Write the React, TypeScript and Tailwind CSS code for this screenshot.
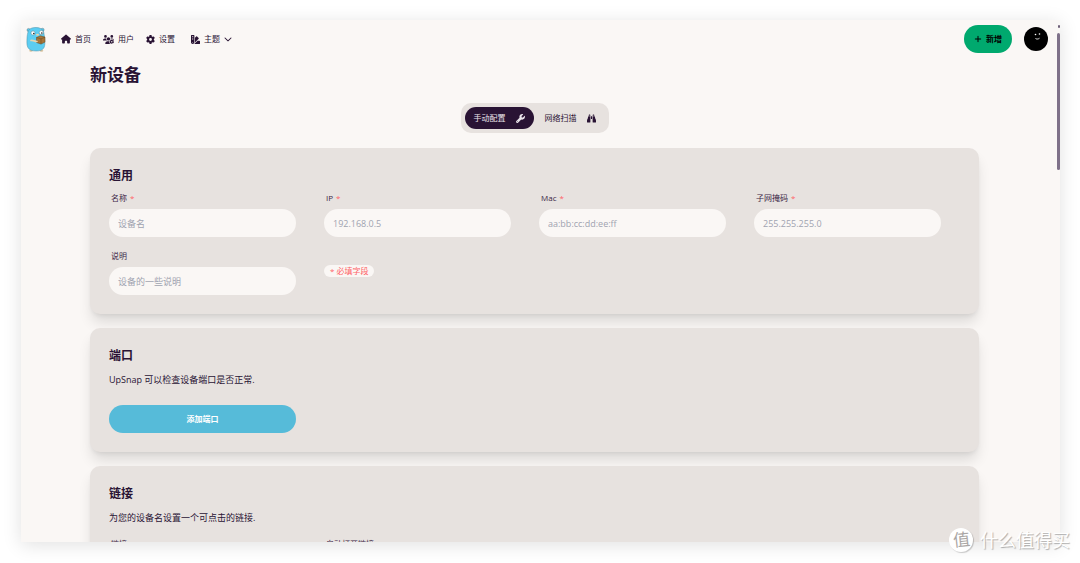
import type { ReactNode } from "react";
import {
  FaBinoculars,
  FaChevronDown,
  FaGear,
  FaHouse,
  FaPlus,
  FaSwatchbook,
  FaUsersGear,
  FaWrench,
} from "react-icons/fa6";

const navLinks = [
  { label: "首页", icon: <FaHouse className="size-[10px]" /> },
  { label: "用户", icon: <FaUsersGear className="size-[11px]" /> },
  { label: "设置", icon: <FaGear className="size-[9px]" /> },
];

const requiredFields = [
  { id: "name", label: "名称", placeholder: "设备名" },
  { id: "ip", label: "IP", placeholder: "192.168.0.5" },
  { id: "mac", label: "Mac", placeholder: "aa:bb:cc:dd:ee:ff" },
  { id: "netmask", label: "子网掩码", placeholder: "255.255.255.0" },
];

function Gopher() {
  return (
    <svg viewBox="0 0 20 25" className="h-[25px] w-5" aria-hidden="true">
      <ellipse cx="5" cy="23.8" rx="1.8" ry="1" fill="#d9c4a0" />
      <ellipse cx="15.5" cy="23.8" rx="1.8" ry="1" fill="#d9c4a0" />
      <circle cx="2.6" cy="3" r="1.6" fill="#5bc8ea" stroke="#4b6670" strokeWidth=".4" />
      <circle cx="16.5" cy="2.8" r="1.6" fill="#5bc8ea" stroke="#4b6670" strokeWidth=".4" />
      <path
        d="M2 5C3 1.500 6 .5 10 .5s7 1.500 7.800 5c.5 3 .7 5 1 9 .4 6-1.300 9.500-8.500 9.500S.8 21 .9 15C1 10.500 1 8.500 2 5z"
        fill="#5ccdf2"
        stroke="#4e8ea3"
        strokeWidth=".5"
      />
      <circle cx="7" cy="6" r="2" fill="#fff" stroke="#58717a" strokeWidth=".4" />
      <circle cx="15.300" cy="5.600" r="2" fill="#fff" stroke="#58717a" strokeWidth=".4" />
      <circle cx="7.800" cy="6.500" r=".8" fill="#222" />
      <circle cx="15.800" cy="6" r=".8" fill="#222" />
      <ellipse cx="11.500" cy="7.800" rx="1.500" ry="1" fill="#e7d3ae" />
      <path d="M10.500 10.500l4-1.700 4.500 1.300v5l-4 2-4.500-1.600z" fill="#a87539" stroke="#674920" strokeWidth=".5" />
      <path d="M10.500 10.500l4.500 1.400 4-1.800M15 11.900v5" fill="none" stroke="#674920" strokeWidth=".5" />
      <path d="M5 13.500c2-.5 3.500.8 6 1" fill="none" stroke="#e7d3ae" strokeWidth="1.600" strokeLinecap="round" />
    </svg>
  );
}

function Card({ title, children }: { title: string; children: ReactNode }) {
  return (
    <section className="rounded-[10px] bg-[#e7e2df] p-[19px] shadow-[0_10px_14px_-2px_rgba(0,0,0,0.12),0_3px_5px_-2px_rgba(0,0,0,0.08)]">
      <h2 className="text-[12px] leading-[18px] font-bold">{title}</h2>
      {children}
    </section>
  );
}

function FieldLabel({ id, label, required }: { id: string; label: string; required?: boolean }) {
  return (
    <label htmlFor={id} className="flex h-5 gap-[3px] px-[2px] text-[8px] leading-[18px] text-[#3c2746]">
      {label}
      {required && <span className="text-[#ff6266]">*</span>}
    </label>
  );
}

function Field({
  id,
  label,
  placeholder,
  required,
}: {
  id: string;
  label: string;
  placeholder?: string;
  required?: boolean;
}) {
  return (
    <div>
      <FieldLabel id={id} label={label} required={required} />
      <input
        id={id}
        type="text"
        placeholder={placeholder}
        className="block h-7 w-full rounded-full bg-[#faf7f5] px-[9px] text-[9px] placeholder:text-[#9fa3b0]"
      />
    </div>
  );
}

function Navbar() {
  return (
    <header className="flex items-center pt-[5px] pl-[5px]">
      <a href="#home" aria-label="UpSnap">
        <Gopher />
      </a>
      <nav className="ml-[15px] flex flex-1 items-center gap-3 text-[8px]">
        {navLinks.map((link) => (
          <a key={link.label} href="#nav" className="flex items-center gap-1">
            {link.icon}
            {link.label}
          </a>
        ))}
        <button type="button" className="ml-1 flex items-center gap-1">
          <FaSwatchbook className="size-[9px]" />
          主题
          <FaChevronDown className="size-[8px]" />
        </button>
      </nav>
      <button
        type="button"
        className="mr-3 flex h-7 items-center gap-1 rounded-full bg-[#00a96e] px-[10px] text-[8px] font-bold text-black"
      >
        <FaPlus className="size-[8px]" />
        新增
      </button>
      <button type="button" aria-label="Account" className="size-6 rounded-full bg-black">
        <svg viewBox="0 0 24 24" className="size-6">
          <circle cx="11.500" cy="7.500" r=".8" fill="#fff" />
          <circle cx="15.500" cy="7" r=".8" fill="#fff" />
          <path d="M11.500 11.500c1.200.8 2.800.7 4-.3" fill="none" stroke="#fff" strokeWidth=".9" />
        </svg>
      </button>
    </header>
  );
}

export default function App() {
  return (
    <div className="relative h-screen overflow-hidden bg-white pt-5 pr-5 pb-[21px] pl-[21px] font-['Open_Sans','Noto_Sans_CJK_SC',sans-serif] text-[#291334]">
      <div className="flex h-full overflow-hidden bg-[#faf7f5] shadow-[0_3px_18px_rgba(0,0,0,0.12)]">
        <div className="min-w-0 flex-1 pr-[9px]">
          <Navbar />
          <main className="px-[69px]">
            <h1 className="mt-[10px] text-[17px] leading-6 font-bold">新设备</h1>

            <div className="mt-4 flex justify-center">
              <div className="flex gap-[2px] rounded-[10px] bg-[#e7e2df] p-1 text-[8px]">
                <button
                  type="button"
                  className="flex h-[22px] items-center gap-[10px] rounded-full bg-[#291334] px-[9px] text-[#e9e3ea]"
                >
                  手动配置
                  <FaWrench className="size-[9px]" />
                </button>
                <button type="button" className="flex h-[22px] items-center gap-[10px] rounded-full px-[9px]">
                  网络扫描
                  <FaBinoculars className="size-[9px]" />
                </button>
              </div>
            </div>

            <div className="mt-[15px] flex flex-col gap-[14px]">
              <Card title="通用">
                <div className="mt-1 grid grid-cols-[repeat(auto-fill,187px)] gap-x-7 gap-y-[10px]">
                  {requiredFields.map((field) => (
                    <Field key={field.id} {...field} required />
                  ))}
                  <Field id="description" label="说明" placeholder="设备的一些说明" />
                  <span className="self-center justify-self-start rounded-full bg-[#faf7f5] px-[6px] text-[8px] leading-3 text-[#ff6266]">
                    * 必填字段
                  </span>
                </div>
              </Card>

              <Card title="端口">
                <p className="mt-2 text-[9px] leading-[14px]">UpSnap 可以检查设备端口是否正常.</p>
                <button
                  type="button"
                  className="mt-[18px] block h-7 w-[187px] rounded-full bg-[#56bbd9] text-[8px] font-bold text-white"
                >
                  添加端口
                </button>
              </Card>

              <Card title="链接">
                <p className="mt-2 text-[9px] leading-[14px]">为您的设备名设置一个可点击的链接.</p>
                <div className="mt-[10px] grid grid-cols-[repeat(auto-fill,187px)] gap-x-7">
                  <Field id="link" label="链接" />
                  <div>
                    <FieldLabel id="link-open" label="自动打开链接" />
                    <select id="link-open" className="block h-7 w-full rounded-full bg-[#faf7f5]" />
                  </div>
                </div>
              </Card>
            </div>
          </main>
        </div>

        {/* scrollbar */}
        <div className="flex w-[3px] flex-col items-end gap-[5px] pt-[5px]">
          <div className="h-[3px] w-[2px] rounded-full bg-[#6f6078]" />
          <div className="h-[137px] w-[3px] rounded-full bg-[#7f7189]" />
        </div>
      </div>

      {/* watermark */}
      <div className="absolute right-[10px] bottom-[11px] flex items-center gap-[7px] text-white">
        <span className="flex size-6 items-center justify-center rounded-full bg-white text-[17px] leading-6 text-[#aaa6a4] shadow-[1px_1px_1px_rgba(0,0,0,0.2)]">
          <span className="-rotate-6">值</span>
        </span>
        <span className="text-[18px] leading-6 [text-shadow:1px_1px_1px_rgba(0,0,0,0.3)]">什么值得买</span>
      </div>
    </div>
  );
}
